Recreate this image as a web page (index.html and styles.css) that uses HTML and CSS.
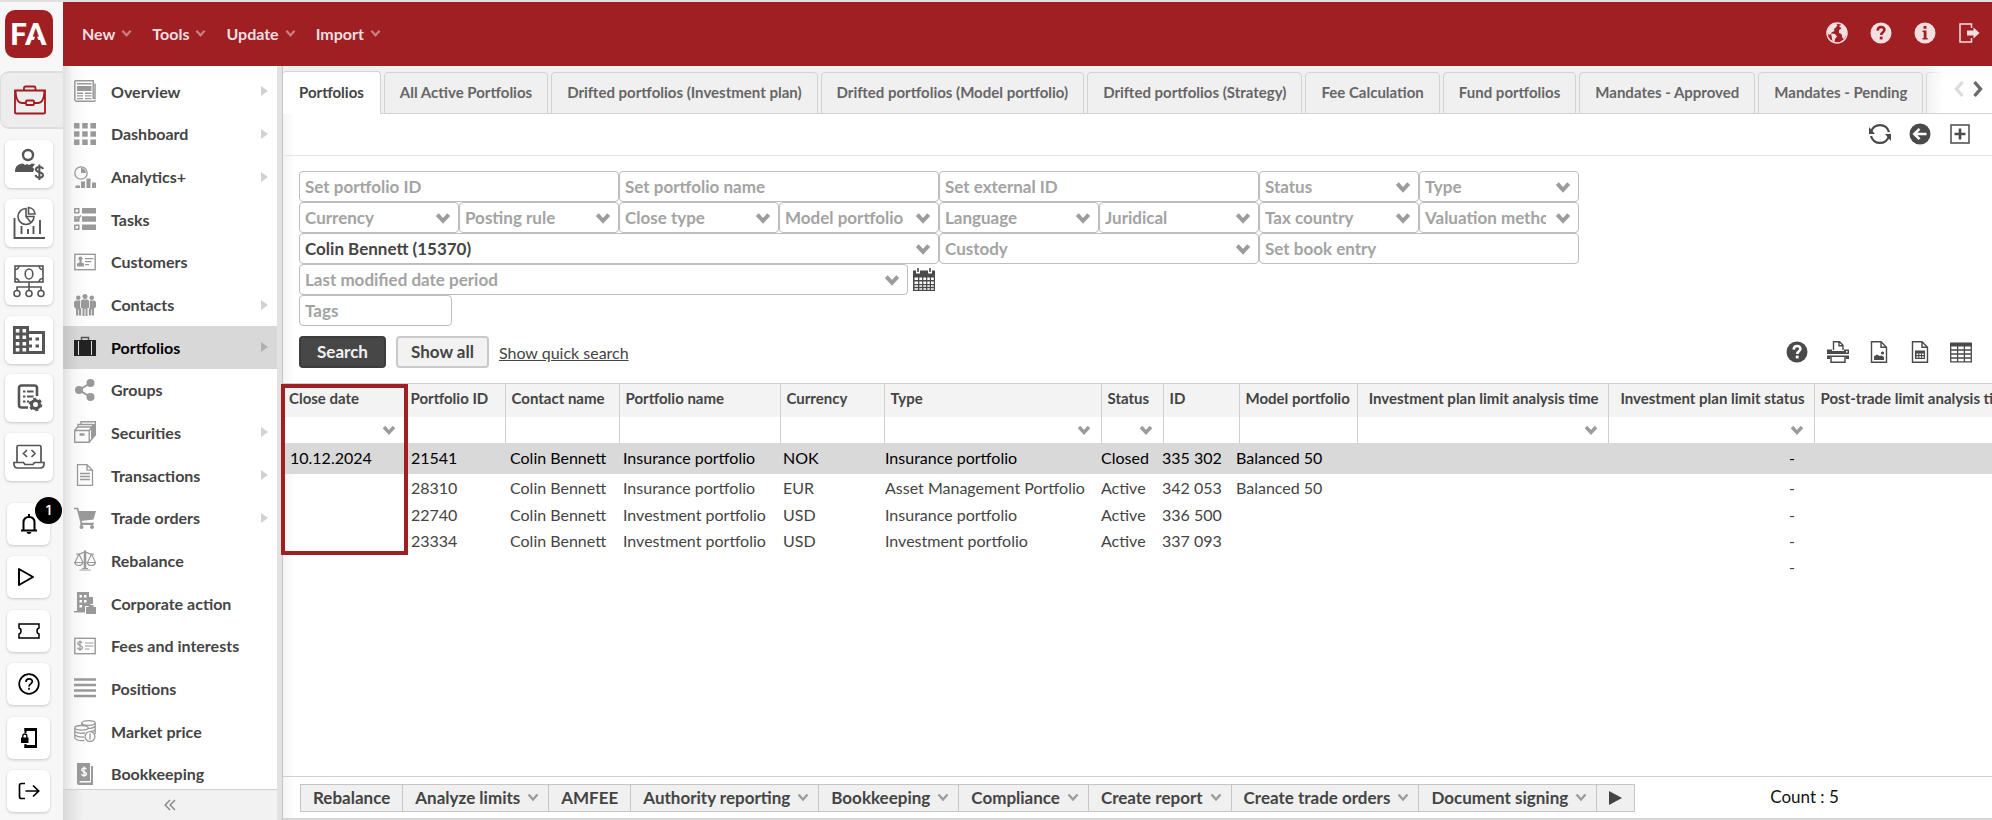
FILE: index.html
```html
<!DOCTYPE html>
<html lang="en">
<head>
<meta charset="utf-8">
<title>Portfolios</title>
<link rel="stylesheet" href="styles.css">
</head>
<body>
<svg class="defs" aria-hidden="true">
  <symbol id="chev" viewBox="0 0 14 10"><path d="M2 2l5 5.500 5-5.500" fill="none" stroke="currentColor" stroke-width="3.400"/></symbol>
  <symbol id="chev-thin" viewBox="0 0 12 9"><path d="M1.500 1.500L6 6.500l4.500-5" fill="none" stroke="currentColor" stroke-width="2.400"/></symbol>
  <symbol id="help" viewBox="0 0 22 22"><circle cx="11" cy="11" r="10.500" fill="currentColor"/><path d="M7.700 8.600C7.800 3.800 14.600 4.100 14.400 8c-.1 2.200-3.200 2.300-3.200 5" fill="none" stroke="var(--hole)" stroke-width="2.600"/><rect x="9.800" y="14.600" width="2.800" height="2.800" fill="var(--hole)"/></symbol>
</svg>
<div class="app">
  <aside class="rail" aria-label="Applications">
    <a class="logo" href="#" aria-label="FA">
      <svg viewBox="0 0 48 48"><rect width="48" height="48" rx="10" fill="#9f1f23"/><text x="5" y="35" class="logo-text">FA</text><path d="M27 35.500L31 24l4.500 11.500z" fill="#9f1f23"/></svg>
    </a>
    <button class="rail-active" aria-label="Back office">
      <svg width="34" height="30" viewBox="0 0 34 30" fill="none" stroke="#a5191f" stroke-width="1.800"><path d="M2 5.500h30v22q0 1-1 1H3q-1 0-1-1zM11 5V3q0-1.500 1.500-1.500h8.500q1.500 0 1.500 1.500v2M2.500 6c.5 8 3 12 6 12H13M31.500 6c-.5 8-3 12-6 12H21"/><rect x="13" y="15.500" width="8" height="4.500" rx="1"/></svg>
    </button>
    <div class="rail-big">
      <button aria-label="Advisor"><svg width="30" height="34" viewBox="0 0 30 34"><circle cx="14" cy="8" r="5" fill="none" stroke="#555" stroke-width="2.400"/><path d="M1 25c0-6 3-8 8-8.500l2 1.500 2-1 2 1 3-1.500 3 .5-2.500 3.500 2 1.500-1.500 3z" fill="#555"/><path d="M29 22c-1-3-7-2.500-7 .5 0 3.500 7 2 7 5.500 0 3.500-6.500 3.500-7.500 0M25.400 17.500v15.500" fill="none" stroke="#555" stroke-width="2"/></svg></button>
      <button aria-label="Analytics"><svg width="32" height="34" viewBox="0 0 32 34" fill="none" stroke="#555" stroke-width="1.600"><path d="M1.500 12v20H32M8.500 20v8M15 23v5M20.500 20v8M27 14v14" stroke-width="1.900"/><path d="M13 2.500a8 8 0 1 0 8 8h-8z"/><path d="M15.500 1.500V8H22a7 7 0 0 0-6.500-6.500zM13 10.500l5 6"/></svg></button>
      <button aria-label="Cash flows"><svg width="32" height="34" viewBox="0 0 32 34" fill="none" stroke="#555" stroke-width="1.600"><rect x="2" y="2" width="28" height="16"/><path d="M2 5.500q3.500 0 4-3.500M30 5.500q-3.500 0-4-3.500M2 14.500q3.500 0 4 3.500M30 14.500q-3.500 0-4 3.500M16 18v8M4 27v-4h24v4"/><ellipse cx="16" cy="10" rx="3.800" ry="5"/><circle cx="4" cy="29.500" r="3"/><circle cx="16" cy="29.500" r="3"/><circle cx="28" cy="29.500" r="3"/></svg></button>
      <button aria-label="Company"><svg width="32" height="30" viewBox="0 0 32 30"><path d="M0 1h16v5h16v23H0z" fill="#555"/><path d="M2.800 4h3.600v3.500H2.800zM9.500 4h3.600v3.500H9.500zM2.800 10.500h3.600V14H2.800zM9.500 10.500h3.600V14H9.500zM2.800 17h3.600v3.500H2.800zM9.500 17h3.600v3.500H9.500zM2.800 23h3.600v3.500H2.800zM9.500 23h3.600v3.500H9.500zM16 9h13v17H16z" fill="#fff"/><path d="M16 12.500h3v3h-3zM22.500 12.500h3.500v3h-3.500zM16 19.500h3v3h-3zM22.500 19.500h3.500v3h-3.500z" fill="#555"/></svg></button>
      <button aria-label="Rules"><svg width="28" height="30" viewBox="0 0 28 30" fill="none" stroke="#555"><path d="M22 13V5q0-2.500-2.500-2.500h-13Q4 2.500 4 5v17q0 2.500 2.500 2.500H13" stroke-width="2.600"/><path d="M8 8.500h2.500M12 8.500h6.500M8 13.500h2.500M12 13.500h6.500M8 18.500h2.500M12 18.500h2" stroke-width="2"/><circle cx="20.500" cy="21.500" r="4" stroke-width="3"/><circle cx="20.500" cy="21.500" r="5.800" stroke-width="2" stroke-dasharray="3 3.070"/></svg></button>
      <button aria-label="Developer"><svg width="32" height="26" viewBox="0 0 32 26" fill="none" stroke="#555" stroke-width="1.700"><path d="M4 18V3q0-1.500 1.500-1.500h21Q28 1.500 28 3v15M1 18.500h9.500l1.500 2h8l1.500-2H31v1.500q0 4-4 4H5q-4 0-4-4zM14 6l-3.500 3.500L14 13M18.500 6L22 9.500 18.500 13"/></svg></button>
    </div>
    <div class="rail-small">
      <button aria-label="Notifications, 1 new"><svg width="20" height="22" viewBox="0 0 20 22"><path d="M2 17.500h16M4.500 17V9.500Q4.500 4 10 4t5.500 5.500V17" fill="none" stroke="#000" stroke-width="2"/><path d="M9 1h2v3H9zM7.500 19h5q-.5 2-2.500 2t-2.500-2z"/></svg><span class="badge">1</span></button>
      <button aria-label="Run"><svg width="24" height="20" viewBox="0 0 24 20"><path d="M2 2l14 8L2 18z" fill="none" stroke="#000" stroke-width="2" stroke-linejoin="round"/></svg></button>
      <button aria-label="Tickets"><svg width="22" height="16" viewBox="0 0 22 16"><path d="M1 1h20v4q-2 .5-2 3t2 3v4H1v-4q2-.5 2-3T1 5z" fill="none" stroke="#000" stroke-width="1.500"/></svg></button>
      <button aria-label="Help"><svg width="22" height="22" viewBox="0 0 22 22" fill="none" stroke="#000" stroke-width="1.700"><circle cx="11" cy="11" r="9.800"/><path d="M8 9c0-4 6.300-4 6.300-.5 0 2.300-3.300 2.500-3.300 5M11 14.800v2"/></svg></button>
      <button aria-label="Lock"><svg width="20" height="22" viewBox="0 0 20 22"><path d="M6.500 6V2H17v18H6.500v-3" fill="none" stroke="#000" stroke-width="2"/><path d="M5.500 1H18v3H5.500zM5.500 18H18v3H5.500zM2 10.500h7.500V16H2z"/><path d="M3.800 11V9q0-2 2-2t2 2v2" fill="none" stroke="#000" stroke-width="1.300"/></svg></button>
      <button aria-label="Log out"><svg width="22" height="18" viewBox="0 0 22 18" fill="none" stroke="#000" stroke-width="1.700"><path d="M7 1.500H3.500q-2 0-2 2v11q0 2 2 2H7M7.500 9H21M15 3.500L20.700 9 15 14.500"/></svg></button>
    </div>
  </aside>
  <div class="shell">
    <header class="topbar">
      <nav class="menu" aria-label="Main menu">
        <button>New<svg><use href="#chev-thin"/></svg></button>
        <button>Tools<svg><use href="#chev-thin"/></svg></button>
        <button>Update<svg><use href="#chev-thin"/></svg></button>
        <button>Import<svg><use href="#chev-thin"/></svg></button>
      </nav>
      <div class="top-icons">
        <button aria-label="Language"><svg viewBox="0 0 22 22"><circle cx="11" cy="11" r="10" fill="none" stroke="currentColor" stroke-width="1.500"/><path d="M2 8l3-5 4-2 2.500 2L10 5.500 8 7l.5 2-3 1.500L4 13l-2-1zM5 11.500l4 .5 2 2.500-2 2.500-.5 3.500L6.500 19zM13 4l3-1.500L19.500 6l1.500 5-1.500 3-1.500 3-1.500-1-1-4-2.500-1V8l2.500-1.500z" fill="currentColor"/></svg></button>
        <button aria-label="Help"><svg><use href="#help"/></svg></button>
        <button aria-label="Info"><svg viewBox="0 0 22 22"><circle cx="11" cy="11" r="10.500" fill="currentColor"/><path d="M9.500 4h3v2.800h-3zM8.500 8.500h4v7.500h1.200v1.500H8.500V16h1.200v-6H8.500z" fill="var(--hole)"/></svg></button>
        <button aria-label="Sign out"><svg viewBox="0 0 22 22"><path d="M13.500 6V2H2v18h11.500v-4" fill="none" stroke="currentColor" stroke-width="1.500"/><path d="M9 8.500h6.500V5.500L21.500 11l-6 5.500v-3H9z" fill="currentColor"/></svg></button>
      </div>
    </header>
    <div class="body">
      <nav class="side" aria-label="Views">
        <div class="side-scroll"><div class="side-list">
          <a href="#" class="more"><svg viewBox="0 0 22 22"><path d="M.8.800h18.400v17.500H21V3.500M.8.800v19q0 1.400 1.500 1.400H20q1.200 0 1.200-1.500" fill="none" stroke="currentColor" stroke-width="1.500"/><path d="M3 3h14.500v1.500H3zM3 6h14.500v5H3zM3 12.500h6V14H3zM11 12.500h6.500V14H11zM3 15.200h6v1.300H3zM11 15.200h6.500v1.300H11zM3 18h6v1.200H3zM11 18h6.500v1.200H11z" fill="currentColor"/></svg>Overview</a>
          <a href="#" class="more"><svg viewBox="0 0 22 22" fill="currentColor"><path d="M0 0h5.500v5.500H0zM8.200 0h5.500v5.500H8.200zM16.400 0H22v5.500h-5.600zM0 8.200h5.500v5.500H0zM8.200 8.200h5.500v5.500H8.200zM16.400 8.200H22v5.500h-5.600zM0 16.400h5.500V22H0zM8.200 16.400h5.500V22H8.200zM16.400 16.400H22V22h-5.600z"/></svg>Dashboard</a>
          <a href="#" class="more"><svg viewBox="0 0 22 22"><circle cx="7" cy="7" r="6.200" fill="none" stroke="currentColor" stroke-width="1.300"/><path d="M7 7V2a5 5 0 0 1 5 5zM1.500 19.500H6V22H1.500zM7 15.500h4V22H7zM12.500 12.500h4V22h-4zM18 16.500h4V22h-4z" fill="currentColor"/></svg>Analytics+</a>
          <a href="#"><svg viewBox="0 0 22 22"><path d="M8 0h14v5.500H8zM8 8.200h14v5.500H8zM8 16.400h14V22H8z" fill="currentColor"/><path d="M.8.800h4v4h-4zM.8 9h4v4h-4zM.8 17.200h4v4h-4zM1.500 10.500l1.500 1.500 4-4.500" fill="none" stroke="currentColor" stroke-width="1.500"/></svg>Tasks</a>
          <a href="#"><svg viewBox="0 0 22 22"><rect x=".8" y="3.300" width="20.400" height="15.400" fill="none" stroke="currentColor" stroke-width="1.400"/><circle cx="6.500" cy="7.500" r="2" fill="currentColor"/><path d="M5.500 8.500h2v3l2.500 1v3H3v-3l2.500-1zM11 7h8.500v1.200H11zM11 10h6.500v1.200H11zM11 13h4v1.200h-4z" fill="currentColor"/></svg>Customers</a>
          <a href="#" class="more"><svg viewBox="0 0 22 22" fill="currentColor"><circle cx="11" cy="2.500" r="2.500"/><circle cx="4.300" cy="3.800" r="2.300"/><circle cx="17.700" cy="3.800" r="2.300"/><path d="M8 5.500h6l1 1.500v7h-1.500v8h-2v-7h-1v7h-2v-8H7V7zM1.500 6.500h4.700V14l1 .5V21.500H5v-6h-.700v6H2v-7L0 13V8zM20.500 6.500h-4.700V14l-1 .5V21.500H17v-6h.7v6H20v-7l2-1.500V8z"/></svg>Contacts</a>
          <a href="#" class="more current" aria-current="page"><svg viewBox="0 0 22 22"><path d="M0 4h22v16H0z" fill="#222"/><path d="M7.500 4V1.500h7V4" fill="none" stroke="#555" stroke-width="1.500"/><path d="M4.500 5v14M17.500 5v14" stroke="#ddd"/></svg>Portfolios</a>
          <a href="#"><svg viewBox="0 0 22 22"><g fill="currentColor"><circle cx="16.500" cy="4" r="4"/><circle cx="5" cy="11" r="4"/><circle cx="16.500" cy="18" r="4"/></g><path d="M16.500 4L5 11l11.500 7" fill="none" stroke="currentColor" stroke-width="2"/></svg>Groups</a>
          <a href="#" class="more"><svg viewBox="0 0 22 22" fill="none" stroke="currentColor" stroke-width="1.400"><path d="M.7 9.500h14.500v11.800H.7zM.7 9.500L3.500 6H18l-2.800 3.500M4 5.500V3.500h14.500V6M7 3V.8h14.300V14l-6 7"/><path d="M18 6v11.500M20 3v12" stroke-width="2"/><path d="M5.500 13.500h5" stroke-width="2.500"/></svg>Securities</a>
          <a href="#" class="more"><svg viewBox="0 0 22 22" fill="none" stroke="currentColor" stroke-width="1.300"><path d="M3.500.7h9.500l5.500 5.500v15.100h-15zM13 .700v5.500h5.500M6 9.500h10M6 12.500h10M6 15.500h10"/></svg>Transactions</a>
          <a href="#" class="more"><svg viewBox="0 0 22 22"><path d="M0 1.500h3.500l4 15H20" fill="none" stroke="currentColor" stroke-width="1.700"/><path d="M4.500 4H22l-2.500 8.500L7 14zM7 15.500L6 18h13v-1H8z" fill="currentColor"/><circle cx="7.500" cy="20" r="2" fill="currentColor"/><circle cx="18" cy="20" r="2" fill="currentColor"/></svg>Trade orders</a>
          <a href="#"><svg viewBox="0 0 22 22" fill="none" stroke="currentColor" stroke-width="1.200"><path d="M11 1v18M2 5q5 .500 7-1.500h4q2 2 7 1.500M5 5L1 13.500M5 5l4 8.500M17.500 5l-4 8.500M17.500 5l4 8.500M5.500 21h11M8 19.500h6"/><path d="M11 2v17" stroke-width="2.600"/><path d="M.5 13.500h8.500q-1 3-4.200 3T.5 13.500zM13 13.500h8.500q-1 3-4.200 3T13 13.500z"/></svg>Rebalance</a>
          <a href="#"><svg viewBox="0 0 22 22"><path d="M3 0h12v5h4v7h-2.500v2H11v6.500H0V19h3z" fill="currentColor"/><path d="M5.500 3H8v2.500H5.500zM10 3h2.500v2.500H10zM5.500 8H8v2.500H5.500zM10 8h2.500v2.500H10zM5.500 13H8v2.500H5.500z" fill="#fff"/><path d="M12 15h10v7H12zM14.500 15v-2h5v2" fill="currentColor"/></svg>Corporate action</a>
          <a href="#"><svg viewBox="0 0 22 22" fill="none" stroke="currentColor"><rect x=".8" y="3.300" width="20.400" height="15.400" stroke-width="1.400"/><path d="M8.200 8c-.8-2-4.500-1.500-4.500.500 0 2.500 4.800 1.500 4.800 4 0 2.300-4.200 2.500-5 .2M6 5.500v10.500M11 8h8.500M11 11h8.500M11 14h4.500" stroke-width="1.200"/></svg>Fees and interests</a>
          <a href="#"><svg viewBox="0 0 22 22"><path d="M0 2.500h22M0 8h22M0 13.500h22M0 19h22" stroke="currentColor" stroke-width="2.600"/></svg>Positions</a>
          <a href="#"><svg viewBox="0 0 22 22" fill="none" stroke="currentColor" stroke-width="1.300"><ellipse cx="14.500" cy="3" rx="6.700" ry="2.300"/><path d="M7.800 3v3M21.200 3v11M21 6.500q-2 2-7 2M21 10q-1.500 1.500-5 1.500M.8 8v10q2 3 9.500 2.500M1 11.500q3 2.500 10 1.500M1 15q3 2.500 9 2"/><ellipse cx="7.500" cy="7.800" rx="6.700" ry="2.300"/><circle cx="16" cy="16.500" r="4.900" fill="#fff"/><path d="M16 13.500v6"/></svg>Market price</a>
          <a href="#"><svg viewBox="0 0 22 22"><path d="M3 0h13v18H5.500v1.500H17V3h2v19H5q-2 0-2-2z" fill="currentColor"/><path d="M12.300 6.300c-.8-2-4.600-1.500-4.600.5 0 2.500 4.800 1.500 4.800 4 0 2.300-4.200 2.500-5 .2M10 3.500v10.500" fill="none" stroke="#fff" stroke-width="1.300"/></svg>Bookkeeping</a>
        </div></div>
        <button class="side-foot" aria-label="Collapse menu"><svg width="12" height="12" viewBox="0 0 12 12"><path d="M6 1L1.200 6 6 11M11 1L6.200 6 11 11" fill="none" stroke="#8a8a8a" stroke-width="1.500"/></svg></button>
      </nav>
      <main class="main">
        <div class="tabs" role="tablist">
          <button role="tab" aria-selected="true" class="tab on">Portfolios</button>
          <button role="tab" class="tab">All Active Portfolios</button>
          <button role="tab" class="tab">Drifted portfolios (Investment plan)</button>
          <button role="tab" class="tab">Drifted portfolios (Model portfolio)</button>
          <button role="tab" class="tab">Drifted portfolios (Strategy)</button>
          <button role="tab" class="tab">Fee Calculation</button>
          <button role="tab" class="tab">Fund portfolios</button>
          <button role="tab" class="tab">Mandates - Approved</button>
          <button role="tab" class="tab">Mandates - Pending</button>
          <button role="tab" class="tab">Mandates</button>
          <div class="tab-scroll">
            <button aria-label="Previous tabs" class="dim"><svg width="12" height="18" viewBox="0 0 12 18"><path d="M9.500 2L3.500 9l6 7" fill="none" stroke="currentColor" stroke-width="3.400"/></svg></button>
            <button aria-label="Next tabs"><svg width="12" height="18" viewBox="0 0 12 18"><path d="M2.500 2l6 7-6 7" fill="none" stroke="currentColor" stroke-width="3.400"/></svg></button>
          </div>
        </div>
        <div class="tools">
          <button aria-label="Refresh"><svg viewBox="0 0 22 22"><path d="M2 9A9.300 9.300 0 0 1 20 9M20 13A9.300 9.300 0 0 1 2 13" fill="none" stroke="currentColor" stroke-width="2.300"/><path d="M0 4v7h6zM22 18v-7h-6z" fill="currentColor"/></svg></button>
          <button aria-label="Back"><svg viewBox="0 0 22 22"><circle cx="11" cy="11" r="10.500" fill="currentColor"/><path d="M17.500 11H6M10.500 5.800L5.300 11l5.200 5.200" fill="none" stroke="#fff" stroke-width="2.600"/></svg></button>
          <button aria-label="Add"><svg viewBox="0 0 22 22" fill="none" stroke="currentColor"><rect x="2" y="2" width="18" height="18" stroke-width="1.500"/><path d="M11 5.500v11M5.500 11h11" stroke-width="2.600"/></svg></button>
        </div>
        <form class="search">
          <div class="fields">
            <input class="w2" aria-label="Set portfolio ID" placeholder="Set portfolio ID">
            <input class="w2" aria-label="Set portfolio name" placeholder="Set portfolio name">
            <input class="w2" aria-label="Set external ID" placeholder="Set external ID">
            <span class="pick"><select aria-label="Status"><option>Status</option></select><svg><use href="#chev"/></svg></span>
            <span class="pick"><select aria-label="Type"><option>Type</option></select><svg><use href="#chev"/></svg></span>
            <span class="pick"><select aria-label="Currency"><option>Currency</option></select><svg><use href="#chev"/></svg></span>
            <span class="pick"><select aria-label="Posting rule"><option>Posting rule</option></select><svg><use href="#chev"/></svg></span>
            <span class="pick"><select aria-label="Close type"><option>Close type</option></select><svg><use href="#chev"/></svg></span>
            <span class="pick"><select aria-label="Model portfolio"><option>Model portfolio</option></select><svg><use href="#chev"/></svg></span>
            <span class="pick"><select aria-label="Language"><option>Language</option></select><svg><use href="#chev"/></svg></span>
            <span class="pick"><select aria-label="Juridical"><option>Juridical</option></select><svg><use href="#chev"/></svg></span>
            <span class="pick"><select aria-label="Tax country"><option>Tax country</option></select><svg><use href="#chev"/></svg></span>
            <span class="pick"><select aria-label="Valuation method"><option>Valuation method</option></select><svg><use href="#chev"/></svg></span>
            <span class="pick w4"><select class="set" aria-label="Contact"><option>Colin Bennett (15370)</option></select><svg><use href="#chev"/></svg></span>
            <span class="pick w2"><select aria-label="Custody"><option>Custody</option></select><svg><use href="#chev"/></svg></span>
            <input class="w2" aria-label="Set book entry" placeholder="Set book entry">
            <div class="period w4">
              <span class="pick"><select aria-label="Last modified date period"><option>Last modified date period</option></select><svg><use href="#chev"/></svg></span>
              <button type="button" aria-label="Pick dates"><svg width="22" height="23" viewBox="0 0 22 23"><path d="M0 2.500h3v3h4v-3h8v3h4v-3h3V23H0z" fill="#4a4a4a"/><path d="M4.200 0h1.600v4H4.200zM16.200 0h1.600v4h-1.600z" fill="#4a4a4a"/><path d="M1.500 9.500H5v2.500H1.500zM6.300 9.500h2.800v2.500H6.300zM10.300 9.500h2.800v2.500h-2.800zM14.300 9.500h2.500v2.500h-2.500zM18 9.500h2.800v2.500H18zM1.500 13.500H5V16H1.500zM6.300 13.500h2.800V16H6.300zM10.300 13.500h2.800V16h-2.800zM14.300 13.500h2.500V16h-2.500zM18 13.500h2.800V16H18zM1.500 17.300H5v1.500H1.500zM6.300 17.300h2.800v1.500H6.300zM10.300 17.300h2.800v1.500h-2.800zM14.300 17.300h2.500v1.500h-2.500zM18 17.300h2.800v1.500H18zM1.500 20.300H5v1.500H1.500zM6.300 20.300h2.800v1.500H6.300zM10.300 20.300h2.800v1.500h-2.800zM14.300 20.300h2.500v1.500h-2.500zM18 20.300h2.800v1.500H18z" fill="#fff"/></svg></button>
            </div>
            <input class="tags" aria-label="Tags" placeholder="Tags">
          </div>
          <div class="actions">
            <button type="button" class="btn dark">Search</button>
            <button type="button" class="btn">Show all</button>
            <a href="#">Show quick search</a>
            <div class="export">
              <button type="button" aria-label="Help"><svg><use href="#help"/></svg></button>
              <button type="button" aria-label="Print"><svg viewBox="0 0 22 22"><path d="M6.500 9V.700h6l3.500 3.500V9M12 .700v4h4" fill="none" stroke="currentColor" stroke-width="1.400"/><path d="M0 8.500h5v1.500h12V8.500h5V13H0zM0 14.500h22V18h-3v-2H3v2H0z" fill="currentColor"/><path d="M4 16v5.300h14V16" fill="none" stroke="currentColor" stroke-width="1.500"/><path d="M19 10h1.500v1.500H19z" fill="#fff"/></svg></button>
              <button type="button" aria-label="Export image"><svg viewBox="0 0 22 22"><path d="M3.500.7h9.500l5.500 5.500v15.100h-15zM13 .700v5.500h5.500" fill="none" stroke="currentColor" stroke-width="1.400"/><path d="M6 19v-3.500l3-2 2.500 1.500 2-.5 2.500 1.500v3z" fill="currentColor"/><circle cx="14.500" cy="12" r="1.600" fill="currentColor"/></svg></button>
              <button type="button" aria-label="Export sheet"><svg viewBox="0 0 22 22"><path d="M3.500.7h9.500l5.500 5.500v15.100h-15zM13 .700v5.500h5.500" fill="none" stroke="currentColor" stroke-width="1.400"/><path d="M6 9.500h10V18H6z" fill="currentColor"/><path d="M7.500 12.500h1.800v1.500H7.500zM10.300 12.500h1.800v1.500h-1.800zM13 12.500h1.800v1.500H13zM7.500 15.200h1.800v1.500H7.500zM10.300 15.200h1.800v1.500h-1.800zM13 15.200h1.800v1.500H13z" fill="#fff"/></svg></button>
              <button type="button" aria-label="Columns"><svg viewBox="0 0 22 22"><path d="M0 1.500h22v4H0z" fill="currentColor"/><path d="M.7 2v18.800h20.600V2M.7 9h20.600M.7 13h20.600M.7 17h20.600M7.600 5v16M14.400 5v16" fill="none" stroke="currentColor" stroke-width="1.300"/></svg></button>
            </div>
          </div>
        </form>
        <section class="grid" aria-label="Portfolios">
          <table class="grid-head">
            <colgroup><col class="h1"><col class="h2"><col class="h3"><col class="h4"><col class="h5"><col class="h6"><col class="h7"><col class="h8"><col class="h9"><col class="h10"><col class="h11"><col class="h12"></colgroup>
            <thead>
              <tr><th>Close date</th><th>Portfolio ID</th><th>Contact name</th><th>Portfolio name</th><th>Currency</th><th>Type</th><th>Status</th><th>ID</th><th>Model portfolio</th><th class="num">Investment plan limit analysis time</th><th class="num">Investment plan limit status</th><th>Post-trade limit analysis time</th></tr>
              <tr class="filters"><td><button aria-label="Filter close date"><svg><use href="#chev"/></svg></button></td><td></td><td></td><td></td><td></td><td><button aria-label="Filter type"><svg><use href="#chev"/></svg></button></td><td><button aria-label="Filter status"><svg><use href="#chev"/></svg></button></td><td></td><td></td><td><button aria-label="Filter analysis time"><svg><use href="#chev"/></svg></button></td><td><button aria-label="Filter limit status"><svg><use href="#chev"/></svg></button></td><td></td></tr>
            </thead>
          </table>
          <table class="grid-body">
            <colgroup><col class="b1"><col class="b2"><col class="b3"><col class="b4"><col class="b5"><col class="b6"><col class="b7"><col class="b8"><col class="b9"><col class="b10"><col class="b11"><col class="b12"></colgroup>
            <tbody>
              <tr class="picked"><td>10.12.2024</td><td>21541</td><td>Colin Bennett</td><td>Insurance portfolio</td><td>NOK</td><td>Insurance portfolio</td><td>Closed</td><td>335 302</td><td>Balanced 50</td><td></td><td class="num">-</td><td></td></tr>
              <tr class="second"><td></td><td>28310</td><td>Colin Bennett</td><td>Insurance portfolio</td><td>EUR</td><td>Asset Management Portfolio</td><td>Active</td><td>342 053</td><td>Balanced 50</td><td></td><td class="num">-</td><td></td></tr>
              <tr><td></td><td>22740</td><td>Colin Bennett</td><td>Investment portfolio</td><td>USD</td><td>Insurance portfolio</td><td>Active</td><td>336 500</td><td></td><td></td><td class="num">-</td><td></td></tr>
              <tr><td></td><td>23334</td><td>Colin Bennett</td><td>Investment portfolio</td><td>USD</td><td>Investment portfolio</td><td>Active</td><td>337 093</td><td></td><td></td><td class="num">-</td><td></td></tr>
              <tr><td></td><td></td><td></td><td></td><td></td><td></td><td></td><td></td><td></td><td></td><td class="num">-</td><td></td></tr>
            </tbody>
          </table>
        </section>
        <div class="mark"></div>
        <footer class="bottom">
          <div class="bar">
            <button>Rebalance</button>
            <button>Analyze limits<svg><use href="#chev-thin"/></svg></button>
            <button>AMFEE</button>
            <button>Authority reporting<svg><use href="#chev-thin"/></svg></button>
            <button>Bookkeeping<svg><use href="#chev-thin"/></svg></button>
            <button>Compliance<svg><use href="#chev-thin"/></svg></button>
            <button>Create report<svg><use href="#chev-thin"/></svg></button>
            <button>Create trade orders<svg><use href="#chev-thin"/></svg></button>
            <button>Document signing<svg><use href="#chev-thin"/></svg></button>
            <button aria-label="More actions"><i class="play"></i></button>
          </div>
          <span class="count">Count : 5</span>
        </footer>
      </main>
    </div>
  </div>
</div>
</body>
</html>
```
FILE: styles.css
```css
* { box-sizing: border-box; }
body { margin: 0; font-family: Lato, sans-serif; font-size: 16px; color: #444; background: #f0f0f0; }
button { font: inherit; color: inherit; background: none; border: 0; padding: 0; margin: 0; }
a { color: inherit; text-decoration: none; }
svg { display: block; }
.defs { position: absolute; width: 0; height: 0; }
.app { display: flex; height: 100vh; overflow: hidden; border-top: 2px solid #e0e0e0; }

.rail { flex: none; width: 63px; background: #f7f7f7; display: flex; flex-direction: column; }
.logo { width: 48px; height: 48px; margin: 8px 0 13px 5px; }
.logo-text { font: 900 30px Lato, sans-serif; fill: #fff; }
.rail-active { height: 58px; display: grid; place-items: center; padding-right: 4px; background: #ededed; border: 2px solid #dedede; border-width: 2px 0 2px 1px; border-radius: 9px 0 0 9px; }
.rail-big, .rail-small { display: flex; flex-direction: column; justify-content: space-between; }
.rail-big { height: 341px; margin: 11px 0 0 5px; width: 48px; }
.rail-small { height: 309px; margin: 22px 0 0 7px; width: 43px; }
.rail-big button, .rail-small button { position: relative; display: grid; place-items: center; background: #fff; border-radius: 6px; box-shadow: 0 1px 3px rgba(0, 0, 0, .2); }
.rail-big button { height: 48px; }
.rail-small button { height: 42px; }
.badge { position: absolute; left: 28px; top: -6px; width: 27px; height: 27px; border-radius: 50%; background: #000; color: #fff; font: 600 13px/27px Inter, sans-serif; text-align: center; }

.shell { flex: 1; min-width: 0; display: flex; flex-direction: column; }
.topbar { flex: none; height: 64px; background: #9f1f23; --hole: #9f1f23; color: #f3dfe0; display: flex; align-items: center; justify-content: space-between; padding: 0 12px 2px 19px; }
.menu { display: flex; gap: 20px; }
.menu button { display: flex; align-items: center; gap: 6px; font-weight: 700; }
.menu svg { width: 11px; height: 9px; color: #c97f82; }
.top-icons { display: flex; gap: 22px; }
.top-icons svg, .tools svg, .export svg { width: 22px; height: 22px; }

.body { flex: 1; min-height: 0; display: flex; background: #e2e2e2; }
.side { flex: none; width: 214px; display: flex; flex-direction: column; background: linear-gradient(90deg, #e0e0e0, #f6f6f6 10px, #fff 26px); }
.side-scroll { flex: 1; min-height: 0; overflow: hidden; padding-top: 4px; }
.side-list { display: grid; grid-template-rows: repeat(17, 1fr); height: 725px; }
.side-list a { display: flex; align-items: center; gap: 15px; padding: 0 9px 0 11px; font-weight: 700; }
.side-list svg { width: 22px; height: 22px; color: #999; }
.side-list .more::after { content: ""; margin-left: auto; border-left: 7px solid #d2d2d2; border-top: 5px solid transparent; border-bottom: 5px solid transparent; }
.side-list .current { background: linear-gradient(90deg, #c4c4c4, #d8d8d8 16px); color: #000; }
.side-list .current::after { border-left-color: #b0b0b0; }
.side-foot { flex: none; height: 31px; border-top: 1px solid #d0d0d0; background: linear-gradient(90deg, #d8d8d8, #f2f2f2 20px); display: grid; place-items: center; }

.main { position: relative; flex: 1; min-width: 0; margin-left: 5px; border-left: 1px solid #c6c6c6; background: linear-gradient(90deg, #f4f4f4, #fff 12px); display: flex; flex-direction: column; }
.tabs { position: relative; flex: none; height: 48px; display: flex; align-items: flex-end; gap: 3px; overflow: hidden; background: #f0f0f0; box-shadow: inset 0 -1px #d3d3d3; }
.tab { flex: none; height: 42px; padding: 0 15px 2px; border: 1px solid #d3d3d3; border-radius: 4px 4px 0 0; background: #f0f0f0; color: #666; font-size: 15px; font-weight: 700; }
.tab.on { height: 43px; padding: 0 16px 2px; background: #fff; color: #444; border-bottom: 0; border-left: 0; }
.tab-scroll { position: absolute; right: 0; top: 0; width: 68px; height: 47px; display: flex; align-items: center; justify-content: flex-end; gap: 7px; padding: 0 8px 2px; background: linear-gradient(90deg, rgba(255, 255, 255, 0), #fff 20px); color: #6a6a6a; }
.tab-scroll .dim { color: #dcdcdc; }
.tools { flex: none; height: 42px; display: flex; align-items: center; justify-content: flex-end; gap: 18px; padding: 0 21px 2px 0; border-bottom: 1px solid #e6e6e6; color: #4a4a4a; }

.search { flex: none; padding: 15px 20px 15px 16px; }
.fields { display: grid; grid-template-columns: repeat(8, 160px); grid-auto-rows: 31px; }
.fields input, .fields select { width: 100%; height: 100%; appearance: none; border: 1px solid #bdbdbd; border-radius: 4px; background: #fff; font: 700 17px Lato, sans-serif; color: #a3a3a3; padding: 0 5px 1px; margin: 0; }
.fields select { padding-right: 32px; }
.fields .set { color: #444; }
.fields ::placeholder { color: #a3a3a3; opacity: 1; }
.fields .w2 { grid-column: span 2; }
.fields .w4 { grid-column: span 4; }
.fields .tags { grid-column: 1 / span 4; width: 153px; }
.pick { position: relative; }
.pick svg { position: absolute; right: 8px; top: 10px; width: 16px; height: 12px; color: #9c9c9c; pointer-events: none; }
.period { display: flex; align-items: center; gap: 5px; padding-right: 4px; }
.period .pick { flex: 1; height: 31px; }
.actions { display: flex; align-items: center; gap: 10px; margin-top: 10px; }
.btn { height: 32px; min-width: 87px; padding: 0 13px; border: 2px solid #c9c9c9; border-radius: 4px; background: #f2f2f2; font-size: 17px; font-weight: 700; line-height: 26px; }
.btn.dark { border-color: #3c3c3c; background: #474747; color: #f2f2f2; }
.actions a { text-decoration: underline; }
.export { display: flex; gap: 19px; margin-left: auto; color: #4a4a4a; --hole: #fff; }

.grid { flex: 1; min-height: 0; overflow: hidden; border-top: 1px solid #cfcfcf; }
.grid table { table-layout: fixed; border-collapse: collapse; width: 1790px; text-align: left; white-space: nowrap; }
.grid th { height: 33px; padding: 0 5px 6px 6px; background: #f3f3f3; border-right: 1px solid #cfcfcf; font-size: 15px; font-weight: 700; }
.grid .num { text-align: right; padding-right: 9px; }
.filters td { height: 26px; padding: 0 10px 0 0; background: #fff; border-right: 1px solid #cfcfcf; }
.filters td:first-child { padding-right: 8px; }
.filters button { display: block; margin-left: auto; }
.filters svg { width: 14px; height: 10px; color: #9c9c9c; }
.grid-body td { height: 26px; padding: 0 0 1px 7px; font-size: 16px; line-height: 20px; }
.grid-body .picked td { height: 31px; background: #d9d9d9; color: #000; }
.grid-body .second td { height: 28px; }
.h1 { width: 121px; } .h2 { width: 101px; } .h3 { width: 114px; } .h4 { width: 161px; } .h5 { width: 104px; } .h6 { width: 217px; }
.h7 { width: 62px; } .h8 { width: 76px; } .h9 { width: 118px; } .h10 { width: 251px; } .h11 { width: 206px; } .h12 { width: 259px; }
.b1 { width: 121px; } .b2 { width: 99px; } .b3 { width: 113px; } .b4 { width: 160px; } .b5 { width: 102px; } .b6 { width: 216px; }
.b7 { width: 61px; } .b8 { width: 74px; } .b9 { width: 118px; } .b10 { width: 251px; } .b11 { width: 206px; } .b12 { width: 269px; }
.mark { position: absolute; left: -2px; top: 318px; width: 127px; height: 171px; border: 4px solid #9f1f23; }

.bottom { flex: none; height: 44px; display: flex; align-items: flex-start; border-top: 1px solid #cfcfcf; box-shadow: inset 0 -2px #d6d6d6; padding: 7px 0 0 17px; }
.bar { display: flex; height: 28px; border: 1px solid #c6c6c6; background: #f0f0f0; }
.bar button { display: flex; align-items: center; gap: 7px; padding: 0 12px 1px; font-size: 17px; font-weight: 700; border-left: 1px solid #c6c6c6; }
.bar button:first-child { border-left: 0; }
.bar button:has(svg) { padding-right: 9px; }
.bar svg { width: 12px; height: 9px; color: #9c9c9c; }
.play { border-left: 13px solid #444; border-top: 7px solid transparent; border-bottom: 7px solid transparent; }
.count { margin-left: 135px; font-size: 17px; line-height: 26px; color: #111; }
```
